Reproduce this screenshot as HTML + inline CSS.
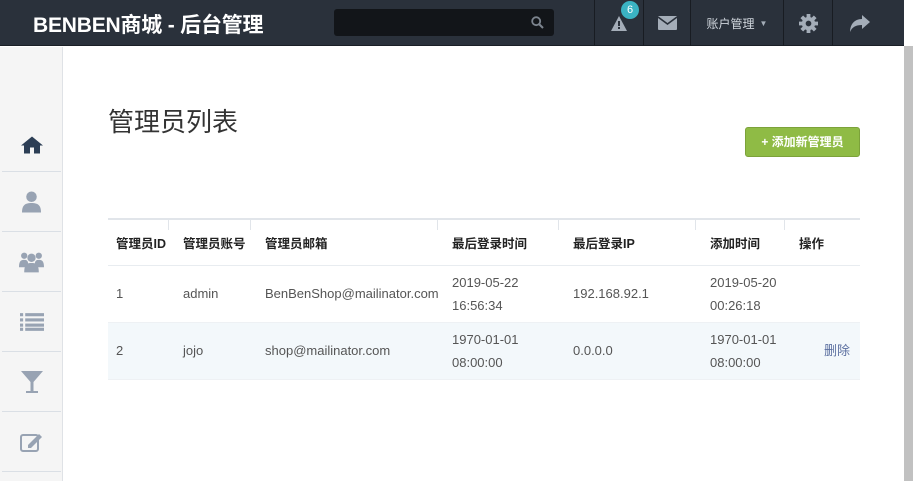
<!DOCTYPE html>
<html><head><meta charset="utf-8"><style>
*{margin:0;padding:0;box-sizing:border-box}
body{width:913px;height:481px;overflow:hidden;background:#fff;font-family:"Liberation Sans","Noto Sans CJK SC",sans-serif;position:relative}
.hdr{position:absolute;left:0;top:0;width:904px;height:46px;background:#2a313b;border-bottom:1px solid #1a1f26}
.logo{position:absolute;left:33px;top:9px;color:#fff;font-size:21px;font-weight:bold;letter-spacing:-0.2px}
.search{position:absolute;left:334px;top:9px;width:220px;height:27px;background:#121519;border-radius:3px}
.nav{position:absolute;top:0;height:46px;border-left:1px solid #181c22;display:flex;align-items:center;justify-content:center;color:#a4adb8}
.sb{position:absolute;left:904px;top:0;width:9px;height:481px;background:#c1c1c1}
.sb:before{content:"";position:absolute;left:0;top:0;width:9px;height:46px;background:#fff}
.side{position:absolute;left:0;top:47px;width:63px;height:434px;background:#f5f5f5;border-right:1px solid #dfe2e6}
.si{position:absolute;left:2px;width:59px;height:60px;border-bottom:1px solid #dadfe5;display:flex;align-items:center;justify-content:center}
h1{position:absolute;left:108px;top:102px;font-size:26px;font-weight:normal;color:#333}
.btn{position:absolute;left:745px;top:127px;width:115px;height:30px;background:#8fbb45;border:1px solid #7ca23a;border-radius:3px;color:#fff;font-size:12px;font-weight:bold;text-align:center;line-height:29px}
table{position:absolute;left:108px;top:218px;width:752px;border-collapse:collapse;font-size:13px;color:#555;table-layout:fixed}
th{text-align:left;font-weight:bold;color:#222;height:46px;border-top:2px solid #e1e5ea;border-bottom:1px solid #e8ecf0;padding-left:15px;font-size:12.5px;position:relative}
td{padding-left:15px;height:57px;line-height:23px;border-bottom:1px solid #eef1f4;white-space:nowrap}
th:first-child,td:first-child{padding-left:8px}
tr.alt td{background:#f3f8fb}
th.d:before{content:"";position:absolute;left:0;top:0;height:10px;border-left:1px solid #e1e5ea}
</style></head><body>
<div class="hdr">
<div class="logo">BENBEN商城 - 后台管理</div>
<div class="search"><svg style="position:absolute;right:10px;top:7px" width="13" height="13" viewBox="0 0 13 13"><circle cx="5.2" cy="5.2" r="4" fill="none" stroke="#7c848e" stroke-width="1.8"/><path d="M8 8l4 4" stroke="#7c848e" stroke-width="2"/></svg></div>
<div class="nav" style="left:594px;width:49px"><svg width="18" height="17" viewBox="0 0 18 17"><path d="M9 1L17 16H1Z" fill="#a4adb8"/><rect x="8" y="6" width="2" height="5" fill="#2a313b"/><rect x="8" y="12" width="2" height="2" fill="#2a313b"/></svg>
<div style="position:absolute;left:26px;top:1px;width:18px;height:18px;border-radius:9px;background:#3bb3c3;color:#fff;font-size:11px;text-align:center;line-height:18px">6</div></div>
<div class="nav" style="left:643px;width:47px"><svg width="19" height="14" viewBox="0 0 19 14"><rect width="19" height="14" rx="1" fill="#a4adb8"/><path d="M0 1l9.5 7L19 1" fill="none" stroke="#2a313b" stroke-width="1.6"/></svg></div>
<div class="nav" style="left:690px;width:93px;font-size:12px;color:#cfd5dc">账户管理 <span style="font-size:8px;margin-left:5px;color:#a4adb8">▼</span></div>
<div class="nav" style="left:783px;width:49px"><svg width="19" height="19" viewBox="0 0 20 20"><g fill="#a4adb8"><circle cx="10" cy="10" r="7"/><rect x="8" y="0" width="4" height="20"/><rect x="0" y="8" width="20" height="4"/><rect x="8" y="0" width="4" height="20" transform="rotate(45 10 10)"/><rect x="8" y="0" width="4" height="20" transform="rotate(-45 10 10)"/></g><circle cx="10" cy="10" r="3" fill="#2a313b"/></svg></div>
<div class="nav" style="left:832px;width:72px;justify-content:flex-start;padding-left:16px"><svg width="21" height="17" viewBox="0 0 21 17"><path d="M13 0L21 7 13 14V10C7 10 3 12 1 17 1 10 5 4 13 4Z" fill="#a4adb8"/></svg></div>
</div>
<div class="sb"></div>
<div class="side">
<div class="si" style="top:38px;height:87px;border-bottom:1px solid #dadfe5"><svg style="margin-top:34px" width="22" height="18" viewBox="0 0 22 17"><path d="M11 0L22 9H19V17H13V11H9V17H3V9H0Z" fill="#2c3e55"/></svg></div>
<div class="si" style="top:125px"><svg width="19" height="22" viewBox="0 0 18 20"><circle cx="9" cy="5" r="5" fill="#98a3b3"/><path d="M0 20C0 13 3 11 9 11S18 13 18 20Z" fill="#98a3b3"/></svg></div>
<div class="si" style="top:185px"><svg width="25" height="22" viewBox="0 0 24 20"><g fill="#98a3b3"><circle cx="5" cy="4" r="3"/><circle cx="19" cy="4" r="3"/><circle cx="12" cy="6" r="4"/><path d="M0 15C0 9 2 8 5 8s4 1 4 7ZM15 15c0-6 1-7 4-7s5 1 5 7Z"/><path d="M5 20C5 12 8 11 12 11s7 1 7 9Z"/></g></svg></div>
<div class="si" style="top:245px"><svg width="24" height="18" viewBox="0 0 23 17"><g fill="#98a3b3"><rect x="0" y="0" width="3" height="3"/><rect x="5" y="0" width="18" height="3"/><rect x="0" y="5" width="3" height="3"/><rect x="5" y="5" width="18" height="3"/><rect x="0" y="10" width="3" height="3"/><rect x="5" y="10" width="18" height="3"/><rect x="0" y="14" width="3" height="3"/><rect x="5" y="14" width="18" height="3"/></g></svg></div>
<div class="si" style="top:305px"><svg width="22" height="22" viewBox="0 0 22 22"><path d="M0 0H22L12.5 11V20H17V22H5V20H9.5V11Z" fill="#98a3b3"/></svg></div>
<div class="si" style="top:365px"><svg width="23" height="20" viewBox="0 0 23 20"><rect x="1" y="3" width="17" height="16" rx="2" fill="none" stroke="#98a3b3" stroke-width="2"/><path d="M8 13L19 2l3 3-11 11H8Z" fill="#98a3b3"/></svg></div>
</div>
<h1>管理员列表</h1>
<div class="btn">+ 添加新管理员</div>
<table>
<colgroup><col style="width:60px"><col style="width:82px"><col style="width:187px"><col style="width:121px"><col style="width:137px"><col style="width:89px"><col></colgroup>
<tr><th>管理员ID</th><th class="d">管理员账号</th><th class="d">管理员邮箱</th><th class="d">最后登录时间</th><th class="d">最后登录IP</th><th class="d">添加时间</th><th class="d">操作</th></tr>
<tr><td>1</td><td>admin</td><td>BenBenShop@mailinator.com</td><td>2019-05-22<br>16:56:34</td><td>192.168.92.1</td><td>2019-05-20<br>00:26:18</td><td></td></tr>
<tr class="alt"><td>2</td><td>jojo</td><td>shop@mailinator.com</td><td>1970-01-01<br>08:00:00</td><td>0.0.0.0</td><td>1970-01-01<br>08:00:00</td><td style="text-align:right;padding-right:10px;color:#5b6fa0">删除</td></tr>
</table>
</body></html>
